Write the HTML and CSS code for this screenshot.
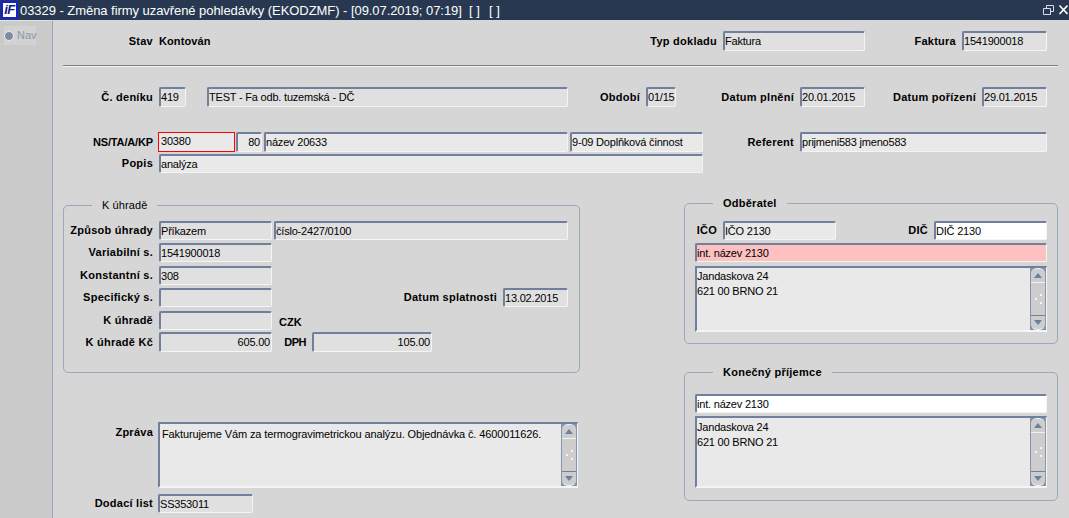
FILE: index.html
```html
<!DOCTYPE html>
<html lang="cs">
<head>
<meta charset="utf-8">
<title>03329 - Změna firmy uzavřené pohledávky</title>
<link rel="stylesheet" href="styles.css">
</head>
<body>
<header class="titlebar">
  <span class="logo">iF</span>
  <span class="title">03329 - Změna firmy uzavřené pohledávky (EKODZMF) - [09.07.2019; 07:19]&nbsp; [ ]<span class="tgap">&nbsp; [ ]</span></span>
  <svg class="winbtn" width="26" height="14" viewBox="0 0 26 14">
    <path d="M1.5 5.5h7v6h-7zM4.5 5V2.5h7v6H9" fill="none" stroke="#d8dde6"/>
    <path d="M17.5 2.5l8 8.5M25.5 2.5l-8 8.5" fill="none" stroke="#fff" stroke-width="1.6"/>
  </svg>
</header>
<div class="app">
  <nav class="side">
    <div class="nav"><span class="radio"></span><span>Nav</span></div>
  </nav>
  <main class="main">
    <div class="row r1">
      <span class="l w90">Stav</span>
      <span class="value w458">Kontován</span>
      <span class="l w100">Typ dokladu</span>
      <span class="f w142 dim">Faktura</span>
      <span class="l w91">Faktura</span>
      <span class="f w85 dim">1541900018</span>
    </div>
    <hr class="sep">
    <div class="row r2">
      <span class="l w90">Č. deníku</span>
      <span class="f w27 dim">419</span>
      <span class="f w361 dim ml21">TEST - Fa odb. tuzemská - DČ</span>
      <span class="l w72">Období</span>
      <span class="f w30 dim">01/15</span>
      <span class="l w118">Datum plnění</span>
      <span class="f w65 dim">20.01.2015</span>
      <span class="l w111">Datum pořízení</span>
      <span class="f w65 dim">29.01.2015</span>
    </div>
    <div class="row r3">
      <span class="l w90 tight">NS/TA/A/KP</span>
      <span class="f w77 red">30380</span>
      <span class="f w26 ml1 num">80</span>
      <span class="f w304 ml2">název 20633</span>
      <span class="f w133 ml2">9-09 Doplňková činnost</span>
      <span class="l w91">Referent</span>
      <span class="f w247">prijmeni583 jmeno583</span>
    </div>
    <div class="row r4">
      <span class="l w90">Popis</span>
      <span class="f w544">analýza</span>
    </div>
    <div class="lower">
      <div class="col-left">
        <section class="group g-pay">
          <h2 class="legend lg-pay">K úhradě</h2>
          <div class="stack">
            <div class="row">
              <span class="l w89">Způsob úhrady</span>
              <span class="f w113 dim">Příkazem</span>
              <span class="f w294 ml2 dim">číslo-2427/0100</span>
            </div>
            <div class="row">
              <span class="l w89">Variabilní s.</span>
              <span class="f w113 dim">1541900018</span>
            </div>
            <div class="row shift">
              <span class="l w89">Konstantní s.</span>
              <span class="f w113 dim">308</span>
            </div>
            <div class="row">
              <span class="l w89">Specifický s.</span>
              <span class="f w113 dim"></span>
              <span class="l w225">Datum splatnosti</span>
              <span class="f w65 dim">13.02.2015</span>
            </div>
            <div class="row shift">
              <span class="l w89">K úhradě</span>
              <span class="f w113 dim"></span>
              <span class="value cur">CZK</span>
            </div>
            <div class="row tall">
              <span class="l w89">K úhradě Kč</span>
              <span class="f w113 dim num">605.00</span>
              <span class="l w34 tighter">DPH</span>
              <span class="f w120 dim num">105.00</span>
            </div>
          </div>
        </section>
        <div class="row msg">
          <span class="l w90 top">Zpráva</span>
          <div class="area a-msg">
            <p class="area-text">Fakturujeme Vám za termogravimetrickou analýzu. Objednávka č. 4600011626.</p>
            <div class="sb">
              <span class="sb-btn up"><svg width="8" height="5" viewBox="0 0 8 5"><path d="M4 0l4 5H0z" fill="#6d7f9c"/></svg></span>
              <span class="sb-thumb"><i class="dot d1"></i><i class="dot d2"></i><i class="dot d3"></i></span>
              <span class="sb-btn down"><svg width="8" height="5" viewBox="0 0 8 5"><path d="M0 0h8L4 5z" fill="#6d7f9c"/></svg></span>
            </div>
          </div>
        </div>
        <div class="row dl">
          <span class="l w90">Dodací list</span>
          <span class="f w95 dim">SS353011</span>
        </div>
      </div>
      <div class="col-right">
        <section class="group g-odb">
          <h2 class="legend bold lg-odb">Odběratel</h2>
          <div class="inner">
            <div class="row">
              <span class="l w22">IČO</span>
              <span class="f w113">IČO 2130</span>
              <span class="l w92">DIČ</span>
              <span class="f w113 white">DIČ 2130</span>
            </div>
            <span class="f w352 pink block">int. název 2130</span>
            <div class="area a-odb">
              <p class="area-text">Jandaskova 24<br>621 00 BRNO 21</p>
              <div class="sb">
                <span class="sb-btn up"><svg width="8" height="5" viewBox="0 0 8 5"><path d="M4 0l4 5H0z" fill="#6d7f9c"/></svg></span>
                <span class="sb-thumb"><i class="dot d1"></i><i class="dot d2"></i><i class="dot d3"></i></span>
                <span class="sb-btn down"><svg width="8" height="5" viewBox="0 0 8 5"><path d="M0 0h8L4 5z" fill="#6d7f9c"/></svg></span>
              </div>
            </div>
          </div>
        </section>
        <section class="group g-kon">
          <h2 class="legend bold lg-kon">Konečný příjemce</h2>
          <div class="inner">
            <span class="f w352 white block">int. název 2130</span>
            <div class="area a-kon">
              <p class="area-text">Jandaskova 24<br>621 00 BRNO 21</p>
              <div class="sb">
                <span class="sb-btn up"><svg width="8" height="5" viewBox="0 0 8 5"><path d="M4 0l4 5H0z" fill="#6d7f9c"/></svg></span>
                <span class="sb-thumb"><i class="dot d1"></i><i class="dot d2"></i><i class="dot d3"></i></span>
                <span class="sb-btn down"><svg width="8" height="5" viewBox="0 0 8 5"><path d="M0 0h8L4 5z" fill="#6d7f9c"/></svg></span>
              </div>
            </div>
          </div>
        </section>
      </div>
    </div>
  </main>
</div>
</body>
</html>
```
FILE: styles.css
```css
* { box-sizing: border-box; }
html, body { margin: 0; height: 100%; overflow: hidden; }
body {
  background: #d6d6d6;
  color: #000;
  font: 11px/15px "Liberation Sans", Arial, sans-serif;
  letter-spacing: -0.2px;
}
.titlebar {
  height: 20px;
  background: #283850;
  color: #fff;
  display: flex;
  align-items: center;
  padding-left: 1px;
}
.logo {
  width: 17px;
  height: 18px;
  background: #fff;
  border: 2px solid #1420d8;
  color: #0c1a80;
  font: italic bold 13px/14px "Liberation Sans", sans-serif;
  text-align: center;
  letter-spacing: -0.5px;
}
.title {
  margin-left: 2px;
  font-size: 13px;
  letter-spacing: -0.07px;
  word-spacing: 0.1px;
  flex: 1;
  white-space: nowrap;
}
.tgap { margin-left: 2px; }
.winbtn { margin-right: 1px; }
.app { display: flex; height: 498px; }
.side {
  width: 53px;
  flex: none;
  background: #cacaca;
  border-right: 1px solid #98a6bb;
  border-top: 1px solid #e2e2e2;
  padding: 5px 0 0 4px;
}
.nav {
  width: 32px;
  height: 19px;
  background: #d2d2d2;
  display: flex;
  align-items: center;
  gap: 3px;
  color: #8a97ad;
  letter-spacing: 0;
}
.radio {
  width: 10px;
  height: 10px;
  border-radius: 50%;
  background: #7c8aa2;
  border: 1.5px solid #ececec;
  flex: none;
}
.main { flex: 1; padding: 11px 0 0 10px; }
.row { display: flex; align-items: center; height: 19px; }
.l {
  flex: none;
  font-weight: bold;
  letter-spacing: 0.25px;
  text-align: right;
  margin-right: 6px;
  white-space: nowrap;
}
.tight { letter-spacing: -0.15px; }
.tighter { letter-spacing: -0.5px; }
.top { align-self: flex-start; }
.value { font-weight: bold; flex: none; letter-spacing: 0.1px; }
.f {
  flex: none;
  display: block;
  height: 19px;
  line-height: 16px;
  padding: 0 1px 0 0;
  background: #e9e9e9;
  border-style: solid;
  border-width: 2px 1px 1px 2px;
  border-color: #6f7f9c #f4f4f4 #f4f4f4 #6f7f9c;
  border-radius: 2px;
  overflow: hidden;
  white-space: nowrap;
}
.dim { background: #e0e0e0; }
.white { background: #fff; }
.pink { background: #ffc0c0; }
.red { border: 1px solid #f00; border-radius: 0; margin-left: -1px; padding-left: 2px; line-height: 17px; }
.num { text-align: right; }
.block { display: block; }
.ml1 { margin-left: 1px; }
.ml2 { margin-left: 2px; }
.ml21 { margin-left: 21px; }
.w22 { width: 22px; } .w26 { width: 26px; } .w27 { width: 27px; }
.w30 { width: 30px; } .w34 { width: 34px; } .w65 { width: 65px; }
.w72 { width: 72px; } .w77 { width: 77px; } .w85 { width: 85px; }
.w89 { width: 89px; } .w90 { width: 90px; } .w91 { width: 91px; } .w92 { width: 92px; }
.w95 { width: 95px; } .w100 { width: 100px; } .w111 { width: 111px; }
.w113 { width: 113px; } .w118 { width: 118px; } .w120 { width: 120px; }
.w133 { width: 133px; } .w142 { width: 142px; } .w225 { width: 225px; }
.w247 { width: 247px; } .w294 { width: 294px; } .w304 { width: 304px; }
.w352 { width: 352px; } .w361 { width: 361px; } .w458 { width: 458px; }
.w544 { width: 544px; }
.sep {
  width: 995px;
  height: 2px;
  margin: 14px 0 0;
  border: 0;
  border-top: 1px solid #808080;
  border-bottom: 1px solid #f2f2f2;
}
.r1, .r2, .r3 { height: 20px; }
.r1 .f, .r2 .f, .r3 .f { height: 20px; line-height: 17px; }
.r2 { margin-top: 20px; }
.r3 { margin-top: 25px; }
.r4 { margin-top: 2px; }
.lower { display: flex; margin-top: 30px; }
.col-left { width: 621px; flex: none; padding-top: 2px; }
.col-right { width: 374px; flex: none; }
.group {
  position: relative;
  border: 1px solid #9aa8bc;
  border-radius: 5px;
}
.legend {
  position: absolute;
  top: -7px;
  margin: 0;
  padding: 0 10px;
  background: #d6d6d6;
  font-size: 11px;
  line-height: 13px;
  font-weight: normal;
  letter-spacing: 0.1px;
  white-space: nowrap;
}
.bold { font-weight: bold; letter-spacing: 0.25px; }
.lg-pay { left: 28px; }
.lg-odb, .lg-kon { left: 28px; }
.g-pay { width: 517px; height: 168px; }
.stack {
  display: flex;
  flex-direction: column;
  gap: 3px;
  padding-top: 15px;
}
.shift { margin-top: 1px; }
.tall { height: 20px; margin-top: -1px; }
.tall .f { height: 20px; line-height: 17px; }
.cur { margin-left: 7px; padding-top: 3px; }
.msg { align-items: flex-start; height: 66px; margin-top: 49px; }
.msg .l { padding-top: 3px; margin-right: 5px; }
.dl { margin-top: 6px; }
.dl .l { margin-right: 5px; }
.g-odb { height: 141px; }
.g-kon { height: 129px; margin-top: 28px; }
.inner {
  display: flex;
  flex-direction: column;
  gap: 3px;
  padding: 17px 0 0 10px;
}
.g-kon .inner { padding-top: 21px; }
.area {
  display: flex;
  background: #e9e9e9;
  border-style: solid;
  border-width: 2px 1px 2px 2px;
  border-color: #6f7f9c #f4f4f4 #f4f4f4 #6f7f9c;
  flex: none;
}
.a-msg { width: 420px; height: 66px; }
.a-odb { width: 352px; height: 66px; margin-top: 1px; }
.a-kon { width: 352px; height: 72px; }
.area-text { flex: 1; margin: 0; padding: 2px 0 0 0; }
.a-msg .area-text { padding: 3px 0 0 2px; letter-spacing: -0.12px; }
.a-odb .area-text { padding-top: 1px; }
.sb {
  width: 16px;
  flex: none;
  display: flex;
  flex-direction: column;
  background: #8595ac;
  padding: 0 1px;
}
.sb-btn {
  height: 15px;
  flex: none;
  display: flex;
  align-items: center;
  justify-content: center;
  background: #cdcdcd;
}
.sb-btn.up {
  border-radius: 6px 6px 0 0;
  border-top: 1px solid #f2f2f2;
  border-bottom: 1px solid #f2f2f2;
}
.sb-btn.down {
  border-radius: 0 0 6px 6px;
  border-bottom: 1px solid #f2f2f2;
  border-top: 1px solid #6f7f9c;
}
.sb-thumb {
  flex: 1;
  position: relative;
  background: #cdcdcd;
}
.dot {
  position: absolute;
  width: 2px;
  height: 2px;
  background: #f4f4f4;
}
.d1 { left: 9px; top: calc(50% - 5px); }
.d2 { left: 4px; top: calc(50% - 1px); }
.d3 { left: 9px; top: calc(50% + 3px); }
```
